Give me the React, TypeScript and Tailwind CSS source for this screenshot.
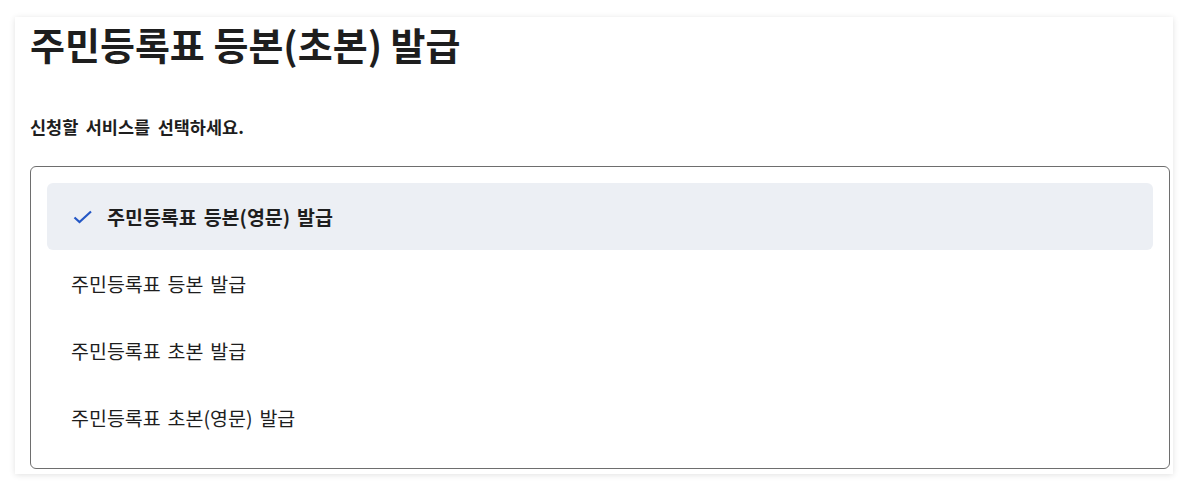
import { useState } from 'react';

const options = [
  '주민등록표 등본(영문) 발급',
  '주민등록표 등본 발급',
  '주민등록표 초본 발급',
  '주민등록표 초본(영문) 발급',
];

const App = () => {
  const [selected, setSelected] = useState(0);
  return (
    <div className="min-h-screen w-full bg-white pt-[15px] pl-[15px] pr-[15px] font-['Noto_Sans_CJK_KR',sans-serif] text-[#1e1e1e]">
      <div className="w-[1158px] h-[457px] bg-white shadow-[0_1px_6px_rgba(0,0,0,0.12)] pl-[15px] pr-[3px]">
        <h1 className="mt-[2px] text-[38px] font-bold leading-[54px]">주민등록표 등본(초본) 발급</h1>
        <p className="mt-[44px] text-[17.5px] font-bold leading-[24px] [word-spacing:3.5px]">신청할 서비스를 선택하세요.</p>
        <ul className="mt-[27px] rounded-[6px] border border-[#6e6e6e] px-4 pt-4 pb-[17px]">
          {options.map((opt, i) => (
            <li
              key={opt}
              onClick={() => setSelected(i)}
              className={
                i === selected
                  ? 'flex h-[67px] items-center gap-[14px] rounded-[6px] bg-[#eceff4] pl-[26px] text-[19.5px] font-bold [word-spacing:2.5px] cursor-pointer'
                  : 'flex h-[67px] items-center rounded-[6px] pl-[24px] text-[19.5px] [word-spacing:2.5px] cursor-pointer'
              }
            >
              {i === selected && (
                <svg width="20" height="14" viewBox="0 0 20 14" fill="none" className="shrink-0">
                  <path d="M1.5 7.5L6.5 12L18 1.5" stroke="#2457c5" strokeWidth="2.2" />
                </svg>
              )}
              {opt}
            </li>
          ))}
        </ul>
      </div>
    </div>
  );
};

export default App;
